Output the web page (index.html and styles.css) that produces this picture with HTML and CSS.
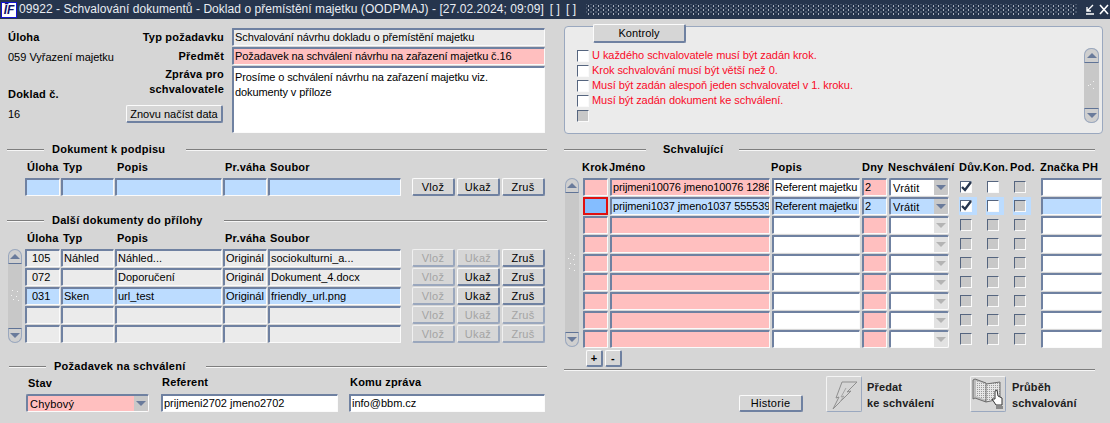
FILE: index.html
```html
<!DOCTYPE html>
<html lang="cs">
<head>
<meta charset="utf-8">
<title>09922 - Schvalování dokumentů</title>
<link rel="stylesheet" href="styles.css">
</head>
<body>
<header class="titlebar">
  <div class="logo">ĪF</div>
  <div class="title">09922 - Schvalování dokumentů - Doklad o přemístění majetku (OODPMAJ) - [27.02.2024; 09:09]</div>
  <div class="title mark">[ ]</div>
  <div class="title mark">[ ]</div>
  <div class="dither"></div>
  <svg class="winbtn" width="24" height="14" viewBox="0 0 24 14"><path d="M8 2 L2 8 M2 4 V8 H6 M1 11 H9" fill="none" stroke="#fff" stroke-width="1.4"/><path d="M15 2 L23 11 M23 2 L15 11" fill="none" stroke="#fff" stroke-width="1.6"/></svg>
</header>

<main class="main">
  <section class="left">
    <div class="head">
      <div class="info">
        <div class="label">Úloha</div>
        <div class="info-val">059 Vyřazení majetku</div>
        <div class="label doklad">Doklad č.</div>
        <div class="info-val">16</div>
      </div>
      <div class="labels">
        <div class="label lab-row">Typ požadavku</div>
        <div class="label lab-row">Předmět</div>
        <div class="label lab-multi">Zpráva pro<br>schvalovatele</div>
        <button class="btn reload">Znovu načíst data</button>
      </div>
      <div class="fields">
        <div class="field">Schvalování návrhu dokladu o přemístění majetku</div>
        <div class="field pink">Požadavek na schválení návrhu na zařazení majetku č.16</div>
        <div class="field white memo">Prosíme o schválení návrhu na zařazení majetku viz.<br>dokumenty v příloze</div>
      </div>
    </div>

    <div class="legend"><i class="ln first"></i><b>Dokument k podpisu</b><i class="ln"></i></div>
    <div class="doc-grid doc-head">
      <span>Úloha</span><span>Typ</span><span>Popis</span><span>Pr.váha</span><span>Soubor</span>
    </div>
    <div class="doc-table">
      <div class="sb-space"></div>
      <div class="doc-rows">
        <div class="doc-row">
          <div class="doc-grid"><div class="field blue"></div><div class="field blue"></div><div class="field blue"></div><div class="field blue"></div><div class="field blue"></div></div>
          <div class="btns"><button class="btn">Vlož</button><button class="btn">Ukaž</button><button class="btn">Zruš</button></div>
        </div>
      </div>
    </div>

    <div class="legend legend-2"><i class="ln first"></i><b>Další dokumenty do přílohy</b><i class="ln"></i></div>
    <div class="doc-grid doc-head">
      <span>Úloha</span><span>Typ</span><span>Popis</span><span>Pr.váha</span><span>Soubor</span>
    </div>
    <div class="doc-table">
      <div class="scroll">
        <div class="sb-btn up"><i></i></div>
        <div class="sb-track"><svg width="8" height="12" viewBox="0 0 8 12"><path d="M1 0h1v1H1zM6 1h1v1H6zM0 5h1v1H0zM5 6h1v1H5zM2 9h1v1H2zM7 10h1v1H7z" fill="#f4f4f4"/></svg></div>
        <div class="sb-btn down"><i></i></div>
      </div>
      <div class="doc-rows">
        <div class="doc-row">
          <div class="doc-grid"><div class="field ind">105</div><div class="field">Náhled</div><div class="field">Náhled...</div><div class="field">Originál</div><div class="field">sociokulturni_a...</div></div>
          <div class="btns"><button class="btn off">Vlož</button><button class="btn off">Ukaž</button><button class="btn">Zruš</button></div>
        </div>
        <div class="doc-row">
          <div class="doc-grid"><div class="field ind">072</div><div class="field"></div><div class="field">Doporučení</div><div class="field">Originál</div><div class="field">Dokument_4.docx</div></div>
          <div class="btns"><button class="btn off">Vlož</button><button class="btn">Ukaž</button><button class="btn">Zruš</button></div>
        </div>
        <div class="doc-row">
          <div class="doc-grid"><div class="field blue ind">031</div><div class="field blue">Sken</div><div class="field blue">url_test</div><div class="field blue">Originál</div><div class="field blue">friendly_url.png</div></div>
          <div class="btns"><button class="btn off">Vlož</button><button class="btn">Ukaž</button><button class="btn">Zruš</button></div>
        </div>
        <div class="doc-row">
          <div class="doc-grid"><div class="field"></div><div class="field"></div><div class="field"></div><div class="field"></div><div class="field"></div></div>
          <div class="btns"><button class="btn off">Vlož</button><button class="btn off">Ukaž</button><button class="btn off">Zruš</button></div>
        </div>
        <div class="doc-row">
          <div class="doc-grid"><div class="field"></div><div class="field"></div><div class="field"></div><div class="field"></div><div class="field"></div></div>
          <div class="btns"><button class="btn off">Vlož</button><button class="btn off">Ukaž</button><button class="btn off">Zruš</button></div>
        </div>
      </div>
    </div>

    <div class="legend legend-3"><i class="ln first"></i><b>Požadavek na schválení</b><i class="ln"></i></div>
    <div class="request">
      <div class="req-col req-stav">
        <div class="label">Stav</div>
        <div class="select pink"><span>Chybový</span><i class="sel-arrow"></i></div>
      </div>
      <div class="req-col req-ref">
        <div class="label">Referent</div>
        <div class="field white">prijmeni2702 jmeno2702</div>
      </div>
      <div class="req-col req-komu">
        <div class="label">Komu zpráva</div>
        <div class="field white">info@bbm.cz</div>
      </div>
    </div>
  </section>

  <section class="right">
    <div class="group">
      <button class="btn tab">Kontroly</button>
      <div class="group-body">
        <div class="msgs">
          <div class="msg"><i class="check on"></i><span>U každého schvalovatele musí být zadán krok.</span></div>
          <div class="msg"><i class="check on"></i><span>Krok schvalování musí být větší než 0.</span></div>
          <div class="msg"><i class="check on"></i><span>Musí být zadán alespoň jeden schvalovatel v 1. kroku.</span></div>
          <div class="msg"><i class="check on"></i><span>Musí být zadán dokument ke schválení.</span></div>
          <div class="msg"><i class="check"></i></div>
        </div>
        <div class="scroll wide">
          <div class="sb-btn up"><i></i></div>
          <div class="sb-track"><svg width="8" height="12" viewBox="0 0 8 12"><path d="M5 1h1v1H5zM0 5h1v1H0zM2 4h1v1H2zM5 8h1v1H5z" fill="#f4f4f4"/></svg></div>
          <div class="sb-btn down"><i></i></div>
        </div>
      </div>
    </div>

    <div class="legend legend-r"><i class="ln first"></i><b>Schvalující</b><i class="ln"></i></div>
    <div class="ap-grid ap-head">
      <span>Krok</span><span>Jméno</span><span>Popis</span><span>Dny</span><span>Neschválení</span>
      <span class="hd-checks"><span class="hd-duv">Dův.</span><span class="hd-kon">Kon.</span><span>Pod.</span></span>
      <span>Značka PH</span>
    </div>
    <div class="ap-table">
      <div class="scroll">
        <div class="sb-btn up"><i></i></div>
        <div class="sb-track"><svg width="8" height="20" viewBox="0 0 8 20"><path d="M2 0h1v1H2zM6 2h1v1H6zM0 5h1v1H0zM5 6h1v1H5zM2 10h1v1H2zM6 11h1v1H6zM1 15h1v1H1zM6 17h1v1H6z" fill="#f4f4f4"/></svg></div>
        <div class="sb-btn down"><i></i></div>
      </div>
      <div class="ap-rows">
        <div class="ap-grid">
          <div class="field pink"></div><div class="field pink">prijmeni10076 jmeno10076 12865</div><div class="field white">Referent majetku</div><div class="field pink">2</div>
          <div class="select white"><span>Vrátit</span><i class="sel-arrow"></i></div>
          <div class="checks"><div class="cc"><i class="check on tick"><svg width="11" height="10" viewBox="0 0 11 10"><path d="M1 5 L4 8 L10 0" fill="none" stroke="#26354d" stroke-width="2.4"/></svg></i></div><div class="cc"><i class="check on"></i></div><div class="cc"><i class="check"></i></div></div>
          <div class="field white"></div>
        </div>
        <div class="ap-grid">
          <div class="field cur"></div><div class="field blue">prijmeni1037 jmeno1037 5555399</div><div class="field blue">Referent majetku</div><div class="field blue">2</div>
          <div class="select blue"><span>Vrátit</span><i class="sel-arrow"></i></div>
          <div class="checks"><div class="cc hl"><i class="check on tick"><svg width="11" height="10" viewBox="0 0 11 10"><path d="M1 5 L4 8 L10 0" fill="none" stroke="#26354d" stroke-width="2.4"/></svg></i></div><div class="cc hl"><i class="check on"></i></div><div class="cc hl"><i class="check"></i></div></div>
          <div class="field blue"></div>
        </div>
        <div class="ap-grid"><div class="field pink"></div><div class="field pink"></div><div class="field white"></div><div class="field pink"></div><div class="select white dim"><span></span><i class="sel-arrow"></i></div><div class="checks"><div class="cc"><i class="check"></i></div><div class="cc"><i class="check"></i></div><div class="cc"><i class="check"></i></div></div><div class="field white"></div></div>
        <div class="ap-grid"><div class="field pink"></div><div class="field pink"></div><div class="field white"></div><div class="field pink"></div><div class="select white dim"><span></span><i class="sel-arrow"></i></div><div class="checks"><div class="cc"><i class="check"></i></div><div class="cc"><i class="check"></i></div><div class="cc"><i class="check"></i></div></div><div class="field white"></div></div>
        <div class="ap-grid"><div class="field pink"></div><div class="field pink"></div><div class="field white"></div><div class="field pink"></div><div class="select white dim"><span></span><i class="sel-arrow"></i></div><div class="checks"><div class="cc"><i class="check"></i></div><div class="cc"><i class="check"></i></div><div class="cc"><i class="check"></i></div></div><div class="field white"></div></div>
        <div class="ap-grid"><div class="field pink"></div><div class="field pink"></div><div class="field white"></div><div class="field pink"></div><div class="select white dim"><span></span><i class="sel-arrow"></i></div><div class="checks"><div class="cc"><i class="check"></i></div><div class="cc"><i class="check"></i></div><div class="cc"><i class="check"></i></div></div><div class="field white"></div></div>
        <div class="ap-grid"><div class="field pink"></div><div class="field pink"></div><div class="field white"></div><div class="field pink"></div><div class="select white dim"><span></span><i class="sel-arrow"></i></div><div class="checks"><div class="cc"><i class="check"></i></div><div class="cc"><i class="check"></i></div><div class="cc"><i class="check"></i></div></div><div class="field white"></div></div>
        <div class="ap-grid"><div class="field pink"></div><div class="field pink"></div><div class="field white"></div><div class="field pink"></div><div class="select white dim"><span></span><i class="sel-arrow"></i></div><div class="checks"><div class="cc"><i class="check"></i></div><div class="cc"><i class="check"></i></div><div class="cc"><i class="check"></i></div></div><div class="field white"></div></div>
        <div class="ap-grid"><div class="field pink"></div><div class="field pink"></div><div class="field white"></div><div class="field pink"></div><div class="select white dim"><span></span><i class="sel-arrow"></i></div><div class="checks"><div class="cc"><i class="check"></i></div><div class="cc"><i class="check"></i></div><div class="cc"><i class="check"></i></div></div><div class="field white"></div></div>
      </div>
    </div>
    <div class="plusminus"><button class="btn pm">+</button><button class="btn pm">-</button></div>
    <div class="rule"></div>
    <div class="actions">
      <button class="btn history">Historie</button>
      <button class="iconbtn first-icon" aria-label="Předat ke schválení">
        <svg width="34" height="34" viewBox="0 0 34 34"><path d="M15 5 H30 L20 15 L24 14 L6 32 L12 20 L9 21 Z" fill="none" stroke="#8f8f8f" stroke-width="1"/><path d="M19 11 L14 20 L17 19 L13 25" fill="none" stroke="#a5a5a5" stroke-width="1"/></svg>
      </button>
      <div class="action-text">Předat<br>ke schválení</div>
      <button class="iconbtn second-icon" aria-label="Průběh schvalování">
        <svg width="34" height="34" viewBox="0 0 34 34">
          <defs><pattern id="dots" width="2" height="2" patternUnits="userSpaceOnUse"><rect width="2" height="2" fill="#e6e6e6"/><rect width="1" height="1" fill="#9a9a9a"/></pattern></defs>
          <path d="M2 3 L4 2 L15 6 L15 25 L4 21 L2 22 Z" fill="#bdbdbd" stroke="#6e6e6e"/>
          <path d="M5 4 L15 7 L15 23 L5 19 Z" fill="url(#dots)"/>
          <path d="M15 7 L29 5 L29 22 L15 25 Z" fill="url(#dots)" stroke="#6e6e6e"/>
          <path d="M24 14 L26 13 L27 19 L31 21 L31 28 L25 28 L21 22 L24 22 Z" fill="#fff" stroke="#333"/>
          <rect x="25" y="29" width="7" height="3" fill="#8a8a8a"/>
        </svg>
      </button>
      <div class="action-text last">Průběh<br>schvalování</div>
    </div>
  </section>
</main>
</body>
</html>
```
FILE: styles.css
```css
* { box-sizing: border-box; }
html, body { margin: 0; padding: 0; }
body {
  width: 1110px;
  height: 423px;
  overflow: hidden;
  background: #d6d6d6;
  font: 11px/15px "Liberation Sans", Arial, sans-serif;
  color: #000;
}
i { display: block; font-style: normal; }

/* Title bar */
.titlebar {
  height: 19px;
  background: #26354d;
  display: flex;
  align-items: center;
  color: #e9edf3;
}
.logo {
  width: 16px;
  height: 16px;
  margin-left: 1px;
  background: #fff;
  border: 1px solid #1515d0;
  color: #10106a;
  font: italic bold 12px/14px "Liberation Sans", sans-serif;
  text-align: center;
  overflow: hidden;
}
.title { font-size: 12px; line-height: 19px; margin-left: 2px; white-space: nowrap; letter-spacing: .05px; }
.mark { margin-left: 6px; }
.dither {
  flex: 1;
  height: 11px;
  margin: 0 8px 0 10px;
  background-image:
    radial-gradient(circle, #aab1be .7px, transparent 1px),
    radial-gradient(circle, #6f7a8d .7px, transparent 1px);
  background-size: 5px 4px;
  background-position: 0 0, 2.5px 2px;
}
.winbtn { margin-right: 1px; flex: none; }

/* Columns */
.main { display: flex; }
.left { width: 540px; margin-left: 7px; flex: none; }
.right { width: 540px; margin-left: 17px; flex: none; }

/* Shared field styles */
.label { font-weight: bold; letter-spacing: .2px; white-space: nowrap; }
.field {
  height: 18px;
  border-style: solid;
  border-width: 2px 1px 1px 2px;
  border-color: #6f81a1 #fbfbfb #fbfbfb #6f81a1;
  border-radius: 1px;
  background: #ebebeb;
  padding-left: 1px;
  line-height: 15px;
  overflow: hidden;
  white-space: nowrap;
}
.fields .field, .ap-rows .field { letter-spacing: -.1px; }
.pink { background: #ffbfbf; }
.blue { background: #bcdcff; }
.white { background: #fff; }
.ind { padding-left: 5px; }
.cur { background: #84bdff; border: 2px solid #e01010; border-radius: 0; }

.btn {
  display: block;
  height: 18px;
  padding: 0;
  font: 11px/14px "Liberation Sans", Arial, sans-serif;
  letter-spacing: .3px;
  color: #000;
  background: #d6d6d6;
  border-style: solid;
  border-width: 1px 2px 2px 1px;
  border-color: #fbfbfb #6f81a1 #6f81a1 #fbfbfb;
  border-radius: 2px;
}
.btn.off { color: #a4a4a4; border-color: #f0f0f0 #9aa7bd #9aa7bd #f0f0f0; }

/* Top left block */
.head { display: flex; height: 123px; padding: 9px 0 0 1px; }
.info { width: 117px; flex: none; }
.info .label { line-height: 18px; }
.info-val { line-height: 16px; margin-top: 3px; }
.doklad { margin-top: 20px; }
.labels { width: 99px; flex: none; text-align: right; display: flex; flex-direction: column; align-items: flex-end; }
.lab-row { line-height: 18px; height: 19px; }
.lab-multi { line-height: 15px; margin-top: 1px; }
.reload { width: 97px; height: 18px; margin: 8px 1px 0 0; letter-spacing: 0; }
.fields { margin-left: 8px; width: 313px; display: flex; flex-direction: column; gap: 1px; }
.memo { height: 67px; white-space: normal; padding-top: 2px; }

/* Section legends */
.legend { display: flex; align-items: center; height: 14px; }
.legend .ln { flex: 1; height: 2px; background: linear-gradient(#7e7e7e 50%, #f6f6f6 50%); margin-top: 2px; }
.legend .first { flex: none; width: 37px; }
.legend b { margin: 0 21px 0 8px; letter-spacing: .25px; white-space: nowrap; }
.legend-2 { margin-top: 17px; }
.legend-3 { margin-top: 16px; padding-left: 2px; }
.legend-r { margin-top: 8px; width: 531px; }
.legend-r .first { width: 82px; }
.legend-r b { margin: 0 16px 0 17px; }

/* Document tables */
.doc-grid { display: grid; grid-template-columns: 35px 53px 107px 44px 133px; gap: 1px; }
.doc-head {
  height: 14px;
  margin: 4px 0 4px 18px;
  font-weight: bold;
  letter-spacing: .2px;
  line-height: 14px;
  white-space: nowrap;
}
.doc-head span { padding-left: 2px; }
.doc-table { display: flex; gap: 3px; padding-left: 1px; }
.sb-space { width: 14px; flex: none; }
.doc-rows { display: flex; flex-direction: column; gap: 1px; }
.doc-row { display: flex; }
.btns { display: flex; gap: 2px; margin-left: 11px; }
.btns .btn { width: 43px; }

/* Scrollbar */
.scroll {
  width: 14px;
  flex: none;
  display: flex;
  flex-direction: column;
  background: #c8c8c8;
  border-radius: 7px;
}
.scroll.wide { width: 15px; height: 75px; }
.sb-btn {
  height: 15px;
  flex: none;
  display: flex;
  align-items: center;
  justify-content: center;
  background: #cfcfcf;
  border: 1px solid #9aa8bf;
}
.sb-btn i { width: 0; height: 0; border-left: 5px solid transparent; border-right: 5px solid transparent; }
.sb-btn.up { border-radius: 7px 7px 0 0; border-bottom: 1px solid #5f7396; }
.sb-btn.up i { border-bottom: 5px solid #6a7b9b; }
.sb-btn.down { border-radius: 0 0 7px 7px; border-top: 1px solid #5f7396; }
.sb-btn.down i { border-top: 5px solid #6a7b9b; }
.sb-track { flex: 1; display: flex; align-items: center; justify-content: center; }

/* Request */
.request { display: flex; padding-left: 19px; }
.req-col { flex: none; display: flex; flex-direction: column; }
.req-col .label { height: 14px; line-height: 14px; margin: 2px 0 5px 1px; }
.req-stav { width: 123px; margin-top: 1px; }
.req-stav .label { margin-left: 2px; margin-bottom: 4px; }
.req-ref { width: 177px; margin-left: 12px; }
.req-komu { width: 196px; margin-left: 11px; }

/* Select */
.select {
  height: 18px;
  display: flex;
  border-style: solid;
  border-width: 2px 1px 1px 2px;
  border-color: #6f81a1 #fbfbfb #fbfbfb #6f81a1;
  border-radius: 2px;
  overflow: hidden;
}
.select span { flex: 1; padding: 2px 0 0 2px; line-height: 13px; letter-spacing: .2px; white-space: nowrap; }
.sel-arrow {
  width: 14px;
  flex: none;
  background: #c8c8c8;
  position: relative;
}
.sel-arrow::after {
  content: "";
  position: absolute;
  left: 2px;
  top: 5px;
  border-left: 5px solid transparent;
  border-right: 5px solid transparent;
  border-top: 5px solid #6a7b9b;
}
.dim .sel-arrow { background: #e2e2e2; }
.dim .sel-arrow::after { border-top-color: #b4b4b4; }

/* Kontroly group */
.group {
  margin-top: 7px;
  width: 539px;
  height: 108px;
  background: #ebebeb;
  border: 1px solid #9aa8bf;
  border-radius: 4px;
}
.tab { width: 93px; height: 19px; margin: -3px 0 0 28px; letter-spacing: .1px; }
.group-body { display: flex; justify-content: space-between; padding: 5px 3px 0 12px; }
.msg { display: flex; align-items: center; height: 15px; gap: 3px; color: #fa0a28; white-space: nowrap; letter-spacing: -.05px; }

/* Check */
.check {
  width: 12px;
  height: 12px;
  flex: none;
  background: #c8c8c8;
  border-style: solid;
  border-width: 1px;
  border-color: #55657f #fafafa #fafafa #55657f;
}
.check.on { background: #fff; }
.tick svg { display: block; }

/* Approvers */
.ap-grid {
  display: grid;
  grid-template-columns: 25px 160px 88px 25px 60px 88px 61px;
  column-gap: 2px;
}
.ap-head {
  height: 14px;
  margin: 4px 0 4px 19px;
  font-weight: bold;
  letter-spacing: .2px;
  line-height: 14px;
  white-space: nowrap;
}
.ap-head > span:nth-child(1),
.ap-head > span:nth-child(2),
.ap-head > span:nth-child(3),
.ap-head > span:nth-child(5),
.ap-head > span:nth-child(7) { margin-left: -1px; }
.hd-checks { display: flex; padding-left: 8px; }
.hd-duv { width: 24px; }
.hd-kon { width: 27px; }
.ap-table { display: flex; gap: 4px; padding-left: 1px; }
.ap-table .scroll { height: 169px; }
.ap-rows { display: flex; flex-direction: column; gap: 1px; }
.checks { display: flex; gap: 9px; padding-left: 8px; }
.cc { width: 18px; height: 18px; padding: 3px 0 0 1px; }
.hl { background: #bcdcff; }
.plusminus { display: flex; gap: 2px; margin: 2px 0 0 22px; height: 17px; }
.pm { width: 17px; height: 17px; font-weight: bold; line-height: 13px; }
.rule { width: 531px; height: 2px; margin-top: 2px; background: linear-gradient(#7e7e7e 50%, #f6f6f6 50%); }

/* Bottom actions */
.actions { display: flex; align-items: flex-start; padding-left: 175px; }
.history { width: 64px; height: 17px; margin-top: 24px; }
.iconbtn {
  width: 36px;
  height: 36px;
  padding: 0;
  margin-top: 5px;
  background: #d6d6d6;
  border-style: solid;
  border-width: 1px;
  border-color: #f4f4f4 #9aa8bf #9aa8bf #f4f4f4;
  border-radius: 2px;
}
.iconbtn svg { display: block; }
.first-icon { margin-left: 23px; }
.action-text {
  width: 103px;
  margin: 8px 0 0 5px;
  font-weight: bold;
  line-height: 16px;
  letter-spacing: .15px;
  white-space: nowrap;
  color: #202020;
}
.action-text.last { width: auto; margin-left: 6px; }
```
